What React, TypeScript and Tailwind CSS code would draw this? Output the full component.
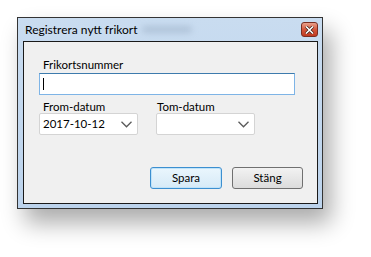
const Chevron = () => (
  <svg width="11" height="7" viewBox="0 0 11 7" className="text-[#5a5a5a]">
    <polyline points="0.5,0.8 5.5,5.8 10.5,0.8" fill="none" stroke="currentColor" strokeWidth="1.3" />
  </svg>
);

const DateSelect = ({ value }: { value?: string }) => (
  <div className="flex h-[22px] w-[99px] items-center justify-between rounded-[2px] border border-[#d4d4d4] bg-white pl-[3px] pr-[5px] text-[11.5px] leading-none text-black">
    <span>{value}</span>
    <Chevron />
  </div>
);

export default function App() {
  return (
    <div className="h-[257px] w-[371px] bg-white pl-[17px] pt-[17px] font-['Lato',sans-serif]">
      <div className="flex h-[192px] w-[306px] flex-col border border-[#333] bg-gradient-to-b from-[#c9dcf0] to-[#bcd3ec] pb-[4px] pl-[5px] pr-[4px] shadow-[8px_14px_22px_rgba(0,0,0,0.33)]">
        <div className="flex h-[23px] items-center justify-between pl-[2px]">
          <div className="flex items-center">
            <span className="text-[12px] leading-none text-black">Registrera nytt frikort</span>
            <div className="ml-[4px] h-[7px] w-[50px] rounded-full bg-[#9fb3c9] opacity-60 blur-[3px]" />
          </div>
          <div className="flex h-[15px] w-[17px] items-center justify-center rounded-[3px] border border-[#7a2e22] bg-gradient-to-b from-[#e8a08c] via-[#d4573c] to-[#c0391f]">
            <svg width="9" height="8" viewBox="0 0 9 8">
              <path d="M1 0.5 L8 7.5 M8 0.5 L1 7.5" stroke="#3a1a12" strokeWidth="3" />
              <path d="M1 0.5 L8 7.5 M8 0.5 L1 7.5" stroke="#fff" strokeWidth="1.6" />
            </svg>
          </div>
        </div>
        <div className="flex flex-1 flex-col border border-[#1a1a1a] bg-[#f0f0f0] pl-[15px] pr-[22px] pt-[17px] text-[11.5px] leading-none text-black">
          <div className="pl-[4px]">Frikortsnummer</div>
          <div className="mt-[2px] flex h-[22px] items-center border border-[#7eb4e6] border-t-[#3d7bad] bg-white pl-[3px]">
            <div className="h-[12px] w-px bg-black" />
          </div>
          <div className="mt-[6px] flex gap-[18px]">
            <div className="flex flex-col">
              <div className="pl-[4px]">From-datum</div>
              <div className="mt-[1px]">
                <DateSelect value="2017-10-12" />
              </div>
            </div>
            <div className="flex flex-col">
              <div className="pl-[1px]">Tom-datum</div>
              <div className="mt-[1px]">
                <DateSelect />
              </div>
            </div>
          </div>
          <div className="-mr-[8px] mt-[32px] flex justify-end gap-[10px]">
            <button className="flex h-[22px] w-[72px] items-center justify-center rounded-[3px] border border-[#3c8fd0] bg-gradient-to-b from-[#eaf6fd] to-[#d6eaf7] text-[11.5px] shadow-[inset_0_0_0_1px_#bfe3f9]">
              Spara
            </button>
            <button className="flex h-[22px] w-[71px] items-center justify-center rounded-[3px] border border-[#707070] bg-gradient-to-b from-[#f2f2f2] to-[#dcdcdc] text-[11.5px]">
              Stäng
            </button>
          </div>
        </div>
      </div>
    </div>
  );
}
